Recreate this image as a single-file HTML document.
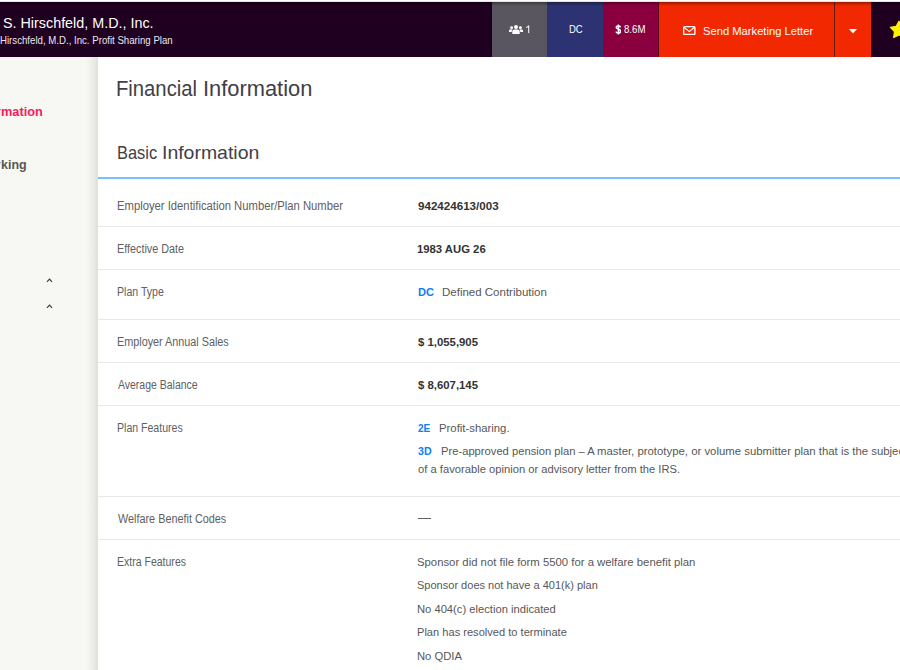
<!DOCTYPE html>
<html><head><meta charset="utf-8">
<style>
html,body{margin:0;padding:0}
body{width:900px;height:670px;overflow:hidden;position:relative;background:#f7f7f3;font-family:"Liberation Sans",sans-serif}
.t{position:absolute;white-space:nowrap;transform-origin:0 0;font-family:"Liberation Sans",sans-serif}
#top{position:absolute;left:0;top:0;width:900px;height:2px;background:linear-gradient(to bottom,#fff 0,#fff 1px,#e6e2e6 1px)}
#hdr{position:absolute;left:0;top:2px;width:900px;height:55px;background:#1f0021}
.bdg{position:absolute;top:2px;height:55px}
#main{position:absolute;left:98px;top:57px;width:802px;height:613px;background:#fff}
#shd{position:absolute;left:86px;top:57px;width:11px;height:613px;background:linear-gradient(to right,rgba(60,60,30,0) 0%,rgba(60,60,30,0.03) 40%,rgba(60,60,30,0.08) 80%,rgba(60,60,30,0.12) 100%)}
#shd2{position:absolute;left:97px;top:57px;width:1px;height:613px;background:#e4dfe1}
#hsh{position:absolute;left:0;top:2px;width:900px;height:4px;background:linear-gradient(to bottom,rgba(0,0,0,0.35),rgba(0,0,0,0))}
#bl{position:absolute;left:98px;top:177px;width:802px;height:2px;background:#76c3f6}
.sep{position:absolute;left:98px;width:802px;height:1px;background:#ebe8ea}
#dash{position:absolute;left:418px;top:518px;width:13px;height:1px;background:#606064}
</style></head><body>
<div id="top"></div>
<div id="hdr"></div>
<div class="bdg" style="left:492px;width:55px;background:#5a5660"></div>
<div class="bdg" style="left:547px;width:56px;background:#2c3272"></div>
<div class="bdg" style="left:603px;width:55px;background:#8a003e"></div>
<div class="bdg" style="left:658px;width:1px;background:#5c0a20"></div>
<div class="bdg" style="left:659px;width:175px;background:#f22800"></div>
<div class="bdg" style="left:834px;width:1px;background:#6a1a0a"></div>
<div class="bdg" style="left:835px;width:36px;background:#f22800"></div>
<div id="hsh"></div>
<!-- users icon -->
<svg style="position:absolute;left:505px;top:20px" width="30" height="20" viewBox="505 20 30 20">
 <circle cx="516" cy="26.9" r="2" fill="#fff"/>
 <path d="M512.3 34 V31.6 C512.3 30.3 513.3 29.6 514.6 29.6 H517.4 C518.7 29.6 519.7 30.3 519.7 31.6 V34 Z" fill="#fff"/>
 <circle cx="511.6" cy="27.7" r="1.45" fill="#fff"/>
 <circle cx="520.4" cy="27.7" r="1.45" fill="#fff"/>
 <path d="M509 32 V30.9 C509 30 509.6 29.5 510.5 29.5 H512.6 C512 30.1 511.7 30.8 511.7 32 Z" fill="#fff"/>
 <path d="M523 32 V30.9 C523 30 522.4 29.5 521.5 29.5 H519.4 C520 30.1 520.3 30.8 520.3 32 Z" fill="#fff"/>
 <path d="M528.2 33 V26.9 C527.6 27.4 526.9 27.7 526.1 27.9 V26.9 C527 26.6 527.7 26.1 528.3 25.4 H529.2 V33 Z" fill="#fff"/>
</svg>
<!-- dollar icon -->
<svg style="position:absolute;left:614.5px;top:24px" width="6.5" height="11" viewBox="0 0 6.5 11">
 <path d="M5.4 3.3 C5.2 2.5 4.4 2.1 3.3 2.1 C2.1 2.1 1.3 2.6 1.3 3.5 C1.3 5.6 5.5 4.6 5.5 7.3 C5.5 8.4 4.6 9 3.3 9 C2 9 1.2 8.5 1 7.6" fill="none" stroke="#fff" stroke-width="1.6"/>
 <path d="M3.3 0.4 V10.6" stroke="#fff" stroke-width="1.3"/>
</svg>
<!-- envelope -->
<svg style="position:absolute;left:683.3px;top:25.8px" width="12.6" height="9.2" viewBox="0 0 12.6 9.2">
 <rect x="0.7" y="0.7" width="11.2" height="7.8" rx="0.9" fill="none" stroke="#fff" stroke-width="1.35"/>
 <path d="M1 1.3 L6.3 5.6 L11.6 1.3" fill="none" stroke="#fff" stroke-width="1.2"/>
</svg>
<!-- caret -->
<svg style="position:absolute;left:849px;top:29px" width="8" height="5" viewBox="0 0 8 5">
 <path d="M0 0 H8 L4 4.5 Z" fill="#fff"/>
</svg>
<!-- star -->
<svg style="position:absolute;left:888px;top:19px" width="22" height="22" viewBox="0 0 22 22">
 <path d="M11.00 2.20 L13.76 7.40 L19.56 8.42 L15.47 12.65 L16.29 18.48 L11.00 15.90 L5.71 18.48 L6.53 12.65 L2.44 8.42 L8.24 7.40 Z" fill="#fff200" stroke="#fff200" stroke-width="1.3" stroke-linejoin="round"/>
</svg>
<div id="main"></div><div id="shd"></div><div id="shd2"></div>
<div id="bl"></div>
<div class=sep style='top:226px'></div><div class=sep style='top:269px'></div><div class=sep style='top:319px'></div><div class=sep style='top:362px'></div><div class=sep style='top:405px'></div><div class=sep style='top:496px'></div><div class=sep style='top:539px'></div>
<div id="dash"></div>
<!-- chevrons -->
<svg style="position:absolute;left:46px;top:278px" width="7" height="5" viewBox="0 0 7 5">
 <path d="M1 3.9 L3.5 1.2 L6 3.9" fill="none" stroke="#3a3a3a" stroke-width="1.15"/>
</svg>
<svg style="position:absolute;left:46px;top:304px" width="7" height="5" viewBox="0 0 7 5">
 <path d="M1 3.9 L3.5 1.2 L6 3.9" fill="none" stroke="#3a3a3a" stroke-width="1.15"/>
</svg>
<div class=t style="left:2.64px;top:15.00px;font-size:15px;line-height:15px;font-weight:400;color:#ffffff;transform:scaleX(0.9555)">S. Hirschfeld, M.D., Inc.</div>
<div class=t style="left:-0.44px;top:35.80px;font-size:10.3px;line-height:10.3px;font-weight:400;color:#ece6ec;transform:scaleX(0.9372)">Hirschfeld, M.D., Inc. Profit Sharing Plan</div>
<div class=t style="left:568.97px;top:25.00px;font-size:10.2px;line-height:10.2px;font-weight:400;color:#ffffff;transform:scaleX(0.9308)">DC</div>
<div class=t style="left:624.00px;top:25.00px;font-size:10.4px;line-height:10.4px;font-weight:400;color:#ffffff;transform:scaleX(0.9261)">8.6M</div>
<div class=t style="left:703.20px;top:25.90px;font-size:11.2px;line-height:11.2px;font-weight:400;color:#ffffff;transform:scaleX(1.0009)">Send Marketing Letter</div>
<div class=t style="left:-3.55px;top:104.80px;font-size:13px;line-height:13px;font-weight:700;color:#f81a5c;transform:scaleX(0.9500)">r</div>
<div class=t style="left:0.82px;top:104.80px;font-size:13px;line-height:13px;font-weight:700;color:#f81a5c;transform:scaleX(0.9805)">mation</div>
<div class=t style="left:-3.85px;top:158.60px;font-size:12.2px;line-height:12.2px;font-weight:700;color:#575757;transform:scaleX(0.9500)">r</div>
<div class=t style="left:1.28px;top:158.60px;font-size:12.2px;line-height:12.2px;font-weight:700;color:#575757;transform:scaleX(1.0217)">king</div>
<div class=t style="left:116.33px;top:78.00px;font-size:21.6px;line-height:21.6px;font-weight:400;color:#404048;transform:scaleX(0.9373)">Financial</div>
<div class=t style="left:203.28px;top:78.00px;font-size:21.6px;line-height:21.6px;font-weight:400;color:#404048;transform:scaleX(1.0124)">Information</div>
<div class=t style="left:117.32px;top:144.20px;font-size:18.6px;line-height:18.6px;font-weight:400;color:#404048;transform:scaleX(0.8818)">Basic</div>
<div class=t style="left:162.21px;top:144.20px;font-size:18.6px;line-height:18.6px;font-weight:400;color:#404048;transform:scaleX(1.0456)">Information</div>
<div class=t style="left:116.56px;top:200.00px;font-size:12px;line-height:12px;font-weight:400;color:#606060;transform:scaleX(0.9388)">Employer Identification Number/Plan Number</div>
<div class=t style="left:116.60px;top:243.00px;font-size:12px;line-height:12px;font-weight:400;color:#606060;transform:scaleX(0.9014)">Effective Date</div>
<div class=t style="left:116.62px;top:286.00px;font-size:12px;line-height:12px;font-weight:400;color:#606060;transform:scaleX(0.8808)">Plan Type</div>
<div class=t style="left:116.60px;top:336.00px;font-size:12px;line-height:12px;font-weight:400;color:#606060;transform:scaleX(0.9008)">Employer Annual Sales</div>
<div class=t style="left:117.50px;top:379.00px;font-size:12px;line-height:12px;font-weight:400;color:#606060;transform:scaleX(0.8736)">Average Balance</div>
<div class=t style="left:116.62px;top:421.70px;font-size:12px;line-height:12px;font-weight:400;color:#606060;transform:scaleX(0.8795)">Plan Features</div>
<div class=t style="left:117.50px;top:512.50px;font-size:12px;line-height:12px;font-weight:400;color:#606060;transform:scaleX(0.9034)">Welfare Benefit Codes</div>
<div class=t style="left:116.62px;top:555.50px;font-size:12px;line-height:12px;font-weight:400;color:#606060;transform:scaleX(0.8766)">Extra Features</div>
<div class=t style="left:418.40px;top:201.00px;font-size:11.8px;line-height:11.8px;font-weight:700;color:#333333;transform:scaleX(0.9829)">942424613/003</div>
<div class=t style="left:417.34px;top:244.00px;font-size:11.8px;line-height:11.8px;font-weight:700;color:#333333;transform:scaleX(0.9577)">1983 AUG 26</div>
<div class=t style="left:417.76px;top:287.00px;font-size:11.8px;line-height:11.8px;font-weight:700;color:#0a80f5;transform:scaleX(0.9400)">DC</div>
<div class=t style="left:441.53px;top:287.00px;font-size:11.8px;line-height:11.8px;font-weight:400;color:#575757;transform:scaleX(0.9745)">Defined Contribution</div>
<div class=t style="left:418.30px;top:337.00px;font-size:11.8px;line-height:11.8px;font-weight:700;color:#333333;transform:scaleX(0.9629)">$ 1,055,905</div>
<div class=t style="left:418.30px;top:380.00px;font-size:11.8px;line-height:11.8px;font-weight:700;color:#333333;transform:scaleX(0.9629)">$ 8,607,145</div>
<div class=t style="left:418.40px;top:422.80px;font-size:11.8px;line-height:11.8px;font-weight:700;color:#0a80f5;transform:scaleX(0.8500)">2E</div>
<div class=t style="left:438.54px;top:422.80px;font-size:11.8px;line-height:11.8px;font-weight:400;color:#575757;transform:scaleX(0.9611)">Profit-sharing.</div>
<div class=t style="left:417.50px;top:446.30px;font-size:11.8px;line-height:11.8px;font-weight:700;color:#0a80f5;transform:scaleX(0.9000)">3D</div>
<div class=t style="left:440.75px;top:446.30px;font-size:11.8px;line-height:11.8px;font-weight:400;color:#575757;transform:scaleX(0.9491)">Pre-approved pension plan – A</div>
<div class=t style="left:597.04px;top:446.30px;font-size:11.8px;line-height:11.8px;font-weight:400;color:#575757;transform:scaleX(0.9637)">master, prototype, or volume submitter plan that is the subjec</div>
<div class=t style="left:418.40px;top:463.50px;font-size:11.8px;line-height:11.8px;font-weight:400;color:#575757;transform:scaleX(0.9495)">of a favorable opinion or advisory letter from the IRS.</div>
<div class=t style="left:417.44px;top:556.70px;font-size:11.8px;line-height:11.8px;font-weight:400;color:#575757;transform:scaleX(0.9604)">Sponsor did not file form 5500 for a welfare benefit plan</div>
<div class=t style="left:417.47px;top:579.90px;font-size:11.8px;line-height:11.8px;font-weight:400;color:#575757;transform:scaleX(0.9344)">Sponsor does not have a 401(k) plan</div>
<div class=t style="left:417.45px;top:603.90px;font-size:11.8px;line-height:11.8px;font-weight:400;color:#575757;transform:scaleX(0.9490)">No 404(c) election indicated</div>
<div class=t style="left:417.46px;top:627.20px;font-size:11.8px;line-height:11.8px;font-weight:400;color:#575757;transform:scaleX(0.9405)">Plan has resolved to terminate</div>
<div class=t style="left:417.45px;top:651.00px;font-size:11.8px;line-height:11.8px;font-weight:400;color:#575757;transform:scaleX(0.9522)">No QDIA</div>
</body></html>
